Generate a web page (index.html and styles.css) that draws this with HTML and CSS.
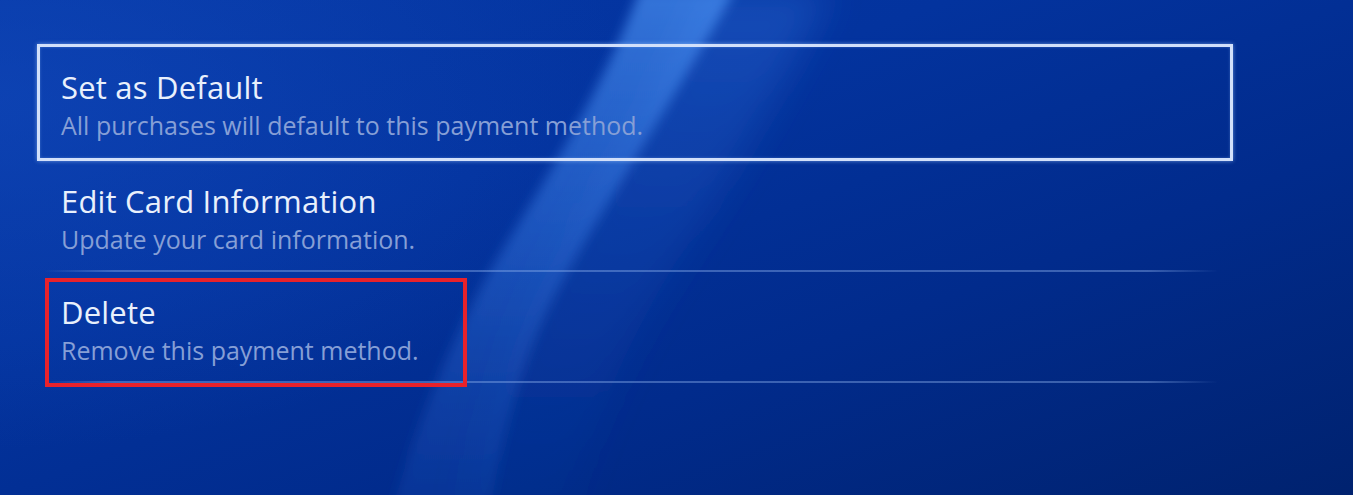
FILE: index.html
```html
<!DOCTYPE html>
<html lang="en">
<head>
<meta charset="utf-8">
<title>Payment method options</title>
<link rel="stylesheet" href="styles.css">
</head>
<body>
<div class="screen">
  <svg class="wave" width="1353" height="495" viewBox="0 0 1353 495" aria-hidden="true">
    <defs>
      <linearGradient id="bandFill" x1="0" y1="0" x2="0" y2="1">
        <stop offset="0" stop-color="#559fff" stop-opacity="0.6"/>
        <stop offset="0.5" stop-color="#3f86f0" stop-opacity="0.38"/>
        <stop offset="1" stop-color="#2a64d0" stop-opacity="0.16"/>
      </linearGradient>
      <linearGradient id="glowFill" x1="0" y1="0" x2="0" y2="1">
        <stop offset="0" stop-color="#3a7de8" stop-opacity="0.32"/>
        <stop offset="1" stop-color="#1d4fb8" stop-opacity="0.08"/>
      </linearGradient>
      <filter id="soft" x="-20%" y="-20%" width="140%" height="140%">
        <feGaussianBlur stdDeviation="6"/>
      </filter>
      <filter id="softer" x="-30%" y="-30%" width="160%" height="160%">
        <feGaussianBlur stdDeviation="18"/>
      </filter>
    </defs>
    <path d="M700 -10 C 640 130 560 230 520 330 C 490 410 470 470 460 510 L 570 510 C 590 430 630 330 690 240 C 740 160 790 70 830 -10 Z" fill="url(#glowFill)" filter="url(#softer)"/>
    <path d="M640 -10 C 595 110 525 210 485 280 C 450 345 418 420 392 510 L 490 510 C 505 420 525 350 560 285 C 604 205 668 110 735 -10 Z" fill="url(#bandFill)" filter="url(#soft)"/>
  </svg>

  <ul class="menu">
    <li class="item item-focused">
      <span class="title">Set as Default</span>
      <span class="desc">All purchases will default to this payment method.</span>
    </li>
    <li class="item item-divided">
      <span class="title">Edit Card Information</span>
      <span class="desc">Update your card information.</span>
    </li>
    <li class="item item-divided">
      <span class="title">Delete</span>
      <span class="desc">Remove this payment method.</span>
    </li>
  </ul>

  <div class="callout" aria-hidden="true"></div>
</div>
</body>
</html>
```

FILE: styles.css
```css
html, body {
  margin: 0;
  padding: 0;
}

body {
  width: 1353px;
  height: 495px;
  overflow: hidden;
  font-family: "Open Sans", "Noto Sans", sans-serif;
}

.screen {
  position: relative;
  width: 1353px;
  height: 495px;
  overflow: hidden;
  background:
    radial-gradient(ellipse 900px 500px at 0% 20%, rgba(20, 75, 190, 0.55), rgba(20, 75, 190, 0) 70%),
    linear-gradient(160deg, #0538a6 0%, #03339e 35%, #012b8c 65%, #00226f 100%);
}

.wave {
  position: absolute;
  left: 0;
  top: 0;
  z-index: 0;
}

.menu {
  position: relative;
  z-index: 1;
  list-style: none;
  margin: 0;
  padding: 44px 0 0 37px;
  width: 1196px;
  display: flex;
  flex-direction: column;
}

.item {
  display: flex;
  flex-direction: column;
  box-sizing: border-box;
}

.item-focused {
  height: 117px;
  border: 3px solid #d2e0fa;
  padding-left: 21px;
  padding-top: 19px;
  box-shadow: 0 0 4px rgba(160, 200, 255, 0.6), inset 0 0 3px rgba(160, 200, 255, 0.35);
}

.item-divided {
  height: 111px;
  padding-top: 19px;
  margin-left: 8px;
  padding-left: 16px;
  width: 1172px;
  border-bottom: 2px solid transparent;
  border-image: linear-gradient(90deg, rgba(140, 175, 235, 0) 0%, rgba(140, 175, 235, 0.42) 6%, rgba(140, 175, 235, 0.42) 94%, rgba(140, 175, 235, 0) 100%) 1;
}

.title {
  color: #e9f0fc;
  font-size: 31px;
  line-height: 42px;
  letter-spacing: 0.2px;
}

.desc {
  color: #869fd6;
  font-size: 25px;
  line-height: 34px;
  letter-spacing: 0;
}

.callout {
  position: absolute;
  z-index: 2;
  left: 45px;
  top: 278px;
  width: 422px;
  height: 109px;
  box-sizing: border-box;
  border: 4px solid #e8222b;
}
```
